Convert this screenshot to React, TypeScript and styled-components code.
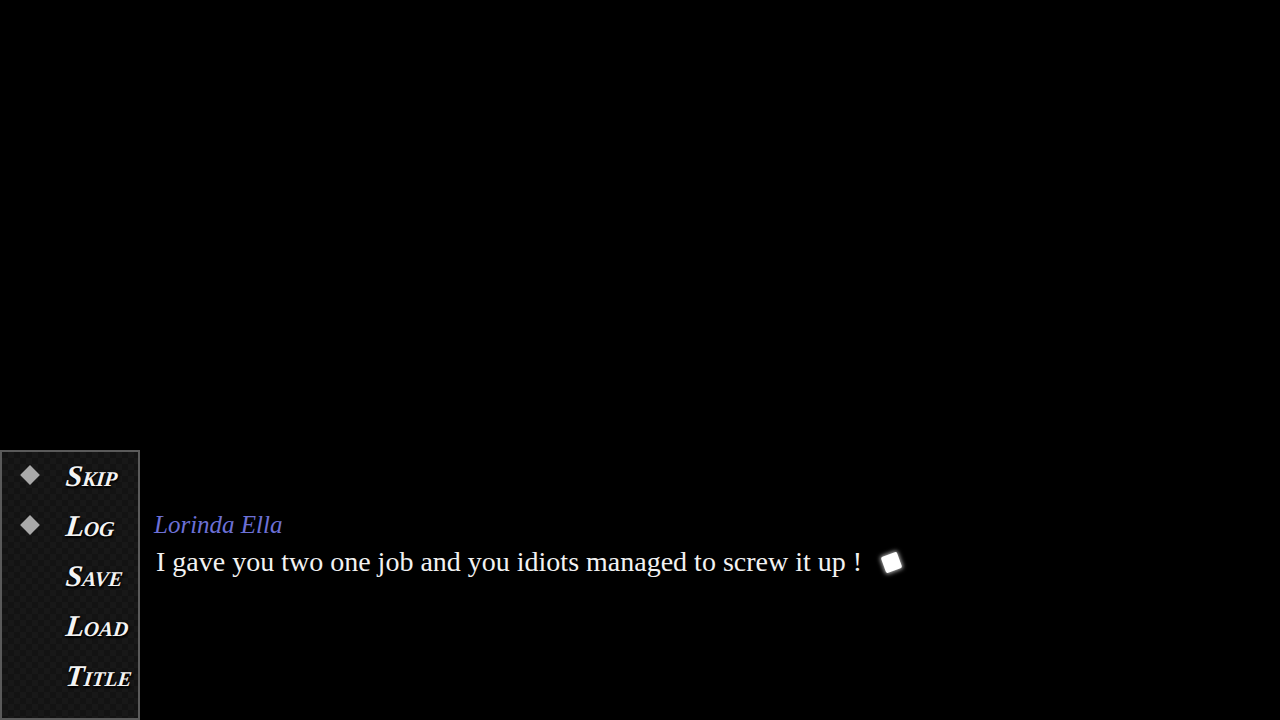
import React from 'react';
import styled, { createGlobalStyle } from 'styled-components';

const GlobalStyle = createGlobalStyle`
  html, body {
    margin: 0;
    padding: 0;
    background: #000;
  }
  #root {
    height: 100vh;
  }
`;

const menu = [
  { label: 'Skip', marked: true },
  { label: 'Log', marked: true },
  { label: 'Save', marked: false },
  { label: 'Load', marked: false },
  { label: 'Title', marked: false },
];

const App = () => {
  return (
    <>
      <GlobalStyle />
      <Screen>
        <BottomRow>
          <MenuPanel>
            {menu.map((item) => (
              <MenuItem key={item.label}>
                <Marker $visible={item.marked} />
                <MenuLabel>{item.label}</MenuLabel>
              </MenuItem>
            ))}
          </MenuPanel>
          <MessageBox>
            <SpeakerName>Lorinda Ella</SpeakerName>
            <MessageLine>
              I gave you two one job and you idiots managed to screw it up !
              <NextCursor />
            </MessageLine>
          </MessageBox>
        </BottomRow>
      </Screen>
    </>
  );
};

export default App;

const Screen = styled.div`
  width: 1280px;
  height: 720px;
  background: #000;
  display: flex;
  flex-direction: column;
  justify-content: flex-end;
  overflow: hidden;
`;

const BottomRow = styled.div`
  display: flex;
  align-items: flex-start;
  height: 270px;
`;

const MenuPanel = styled.div`
  box-sizing: border-box;
  width: 140px;
  height: 270px;
  border: 2px solid #5a5a5a;
  background-color: #131313;
  background-image:
    linear-gradient(45deg, #181818 25%, transparent 25%, transparent 75%, #181818 75%),
    linear-gradient(45deg, #181818 25%, transparent 25%, transparent 75%, #181818 75%);
  background-size: 12px 12px;
  background-position: 0 0, 6px 6px;
  display: flex;
  flex-direction: column;
`;

const MenuItem = styled.div`
  height: 50px;
  display: flex;
  align-items: center;
  padding-left: 18px;
  gap: 26px;
  margin-top: -2px;
  margin-bottom: 2px;
`;

const Marker = styled.div<{ $visible: boolean }>`
  width: 14px;
  height: 14px;
  margin: 0 3px;
  background: #a9a9a9;
  transform: rotate(45deg);
  visibility: ${({ $visible }) => ($visible ? 'visible' : 'hidden')};
`;

const MenuLabel = styled.span`
  font-family: 'Liberation Serif', serif;
  font-style: italic;
  font-weight: bold;
  font-variant: small-caps;
  font-size: 30px;
  color: #f4f4f4;
  text-shadow: 1px 2px 2px #000, 0 0 3px #000;
  line-height: 1;
  margin-top: 2px;
  transform: skewX(-6deg);
`;

const MessageBox = styled.div`
  padding: 61px 0 0 14px;
  font-family: 'Liberation Serif', serif;
`;

const SpeakerName = styled.div`
  font-style: italic;
  font-size: 25px;
  line-height: 28px;
  color: #6c70d6;
`;

const MessageLine = styled.div`
  margin-top: 7px;
  padding-left: 2px;
  font-size: 28px;
  line-height: 32px;
  color: #f2f2f2;
  display: flex;
  align-items: center;
  white-space: nowrap;
`;

const NextCursor = styled.span`
  display: inline-block;
  width: 17px;
  height: 17px;
  margin-left: 21px;
  background: #fff;
  border-radius: 2px;
  transform: rotate(-20deg);
  box-shadow: 0 0 4px 1px rgba(255, 255, 255, 0.7);
`;
